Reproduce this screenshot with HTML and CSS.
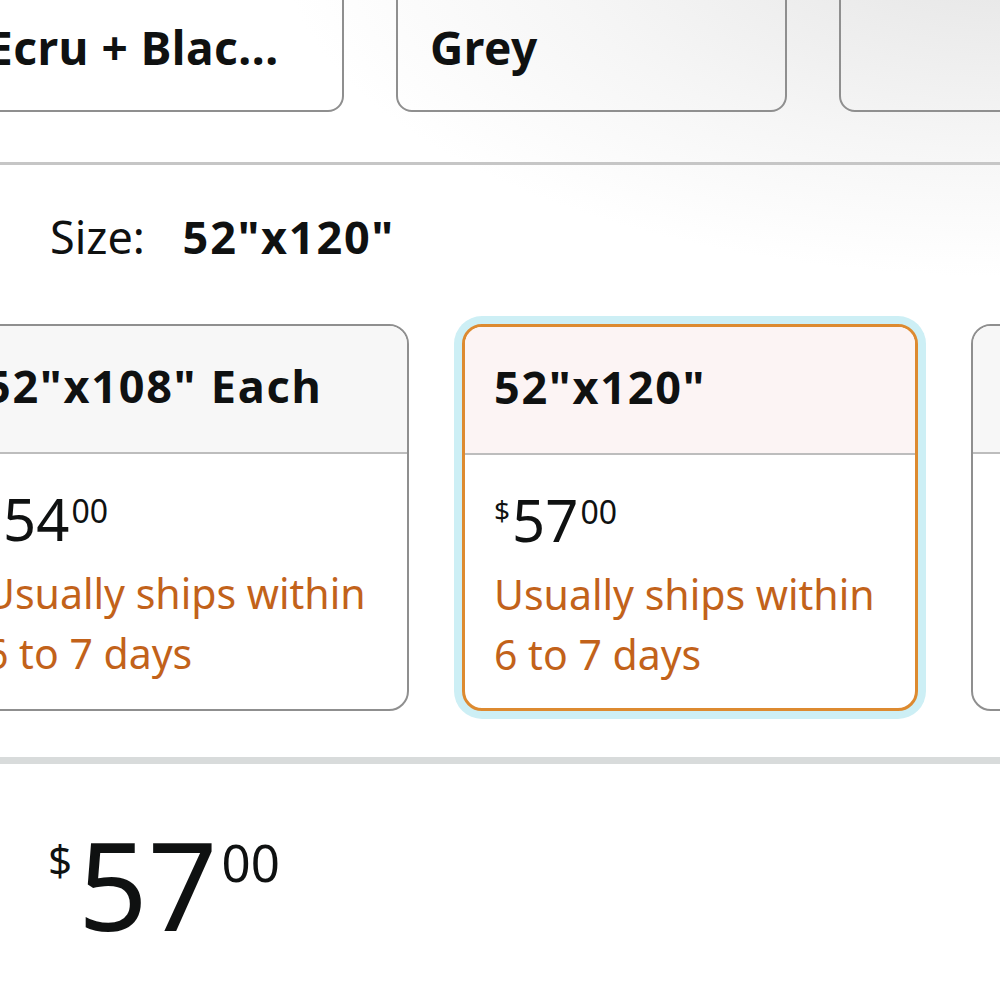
FILE: index.html
```html
<!DOCTYPE html>
<html lang="en">
<head>
  <meta charset="UTF-8" />
  <title>Size options</title>
  <link rel="stylesheet" href="styles.css">
</head>
<body>
  <div class="page">

    <!-- colour swatches (scrolled row) -->
    <div class="top">
      <div class="swatches">
        <div class="swatch"><span>Ecru + Blac...</span></div>
        <div class="swatch"><span>Grey</span></div>
        <div class="swatch"></div>
      </div>
      <hr class="rule">

      <div class="size-label">
        <span class="key">Size:</span>
        <span class="value">52"x120"</span>
      </div>
    </div>

    <!-- size cards -->
    <div class="sizes">
      <div class="size-card">
        <div class="size-head">52"x108" Each</div>
        <div class="size-body">
          <div class="price"><span class="cur">$</span><span class="whole">54</span><span class="frac">00</span></div>
          <div class="ships">Usually ships within 6 to 7 days</div>
        </div>
      </div>
      <div class="size-card selected">
        <div class="size-head">52"x120"</div>
        <div class="size-body">
          <div class="price"><span class="cur">$</span><span class="whole">57</span><span class="frac">00</span></div>
          <div class="ships">Usually ships within 6 to 7 days</div>
        </div>
      </div>
      <div class="size-card">
        <div class="size-head"></div>
        <div class="size-body"></div>
      </div>
    </div>

    <hr class="thick-rule">

    <div class="big-price">
      <span class="cur">$</span><span class="whole">57</span><span class="frac">00</span>
    </div>

  </div>
</body>
</html>
```

FILE: styles.css
```css
* { margin: 0; padding: 0; box-sizing: border-box; }
html, body {
  width: 1000px;
  height: 1000px;
  background: #fff;
  color: #0f1111;
  font-family: "Noto Sans", "Open Sans", sans-serif;
  overflow: hidden;
}

.page {
  width: 1000px;
  height: 1000px;
  overflow: hidden;
}

.top {
  background: radial-gradient(ellipse 900px 420px at 100% 0%, #e4e4e4 0%, #f6f6f6 50%, #fff 80%);
  padding-bottom: 57px;
}

/* swatch row */
.swatches {
  display: flex;
  gap: 52px;
  margin-left: -47px;
  margin-top: -60px;
}
.swatch {
  flex-shrink: 0;
  width: 391px;
  height: 172px;
  border: 2px solid #8f8f8f;
  border-radius: 16px;
  padding: 78px 0 0 32px;
  font-size: 46px;
  line-height: 55px;
  font-weight: 700;
  letter-spacing: 0.5px;
  white-space: nowrap;
}

.rule {
  border: none;
  height: 3px;
  background: #c6c6c6;
  margin-top: 50px;
}

.size-label {
  padding: 42px 0 0 50px;
  font-size: 45px;
  line-height: 60px;
}
.size-label .value {
  font-weight: 700;
  margin-left: 26px;
  letter-spacing: 1.8px;
}

/* size cards */
.sizes {
  display: flex;
  gap: 53px;
  margin-left: -47px;
}
.size-card {
  flex-shrink: 0;
  width: 456px;
  height: 387px;
  border: 2px solid #8f8f8f;
  border-radius: 20px;
  overflow: hidden;
  background: #fff;
}
.size-card.selected {
  border: 3px solid #dd8a30;
  box-shadow: 0 0 0 8px #cdeff5;
}
.size-head {
  height: 128px;
  background: #f7f7f7;
  border-bottom: 2px solid #bdbdbd;
  padding: 0 0 8px 30px;
  display: flex;
  align-items: center;
  font-size: 45px;
  font-weight: 700;
  letter-spacing: 1.8px;
  white-space: nowrap;
}
.selected .size-head {
  background: #fcf4f4;
  padding-left: 29px;
}
.size-body {
  padding: 32px 30px 0 30px;
}
.selected .size-body {
  padding-left: 29px;
}

.price {
  display: flex;
  align-items: flex-start;
  line-height: 1;
  height: 64px;
  padding-top: 4px;
}
.price .cur {
  font-size: 28px;
  margin-top: 5px;
  margin-right: 2px;
}
.price .whole {
  font-size: 58px;
}
.price .frac {
  font-size: 32px;
  margin-top: 5px;
  margin-left: 2px;
}

.ships {
  margin-top: 13px;
  font-size: 41px;
  line-height: 60px;
  color: #c2621a;
}

.thick-rule {
  border: none;
  height: 7px;
  background: #d8dbdb;
  margin-top: 46px;
}

.big-price {
  display: flex;
  align-items: flex-start;
  line-height: 1;
  padding: 59px 0 0 48px;
}
.big-price .cur {
  font-size: 42px;
  margin-top: 16px;
  margin-right: 6px;
}
.big-price .whole {
  font-size: 122px;
}
.big-price .frac {
  font-size: 51px;
  margin-top: 14px;
  margin-left: 4px;
}
```
